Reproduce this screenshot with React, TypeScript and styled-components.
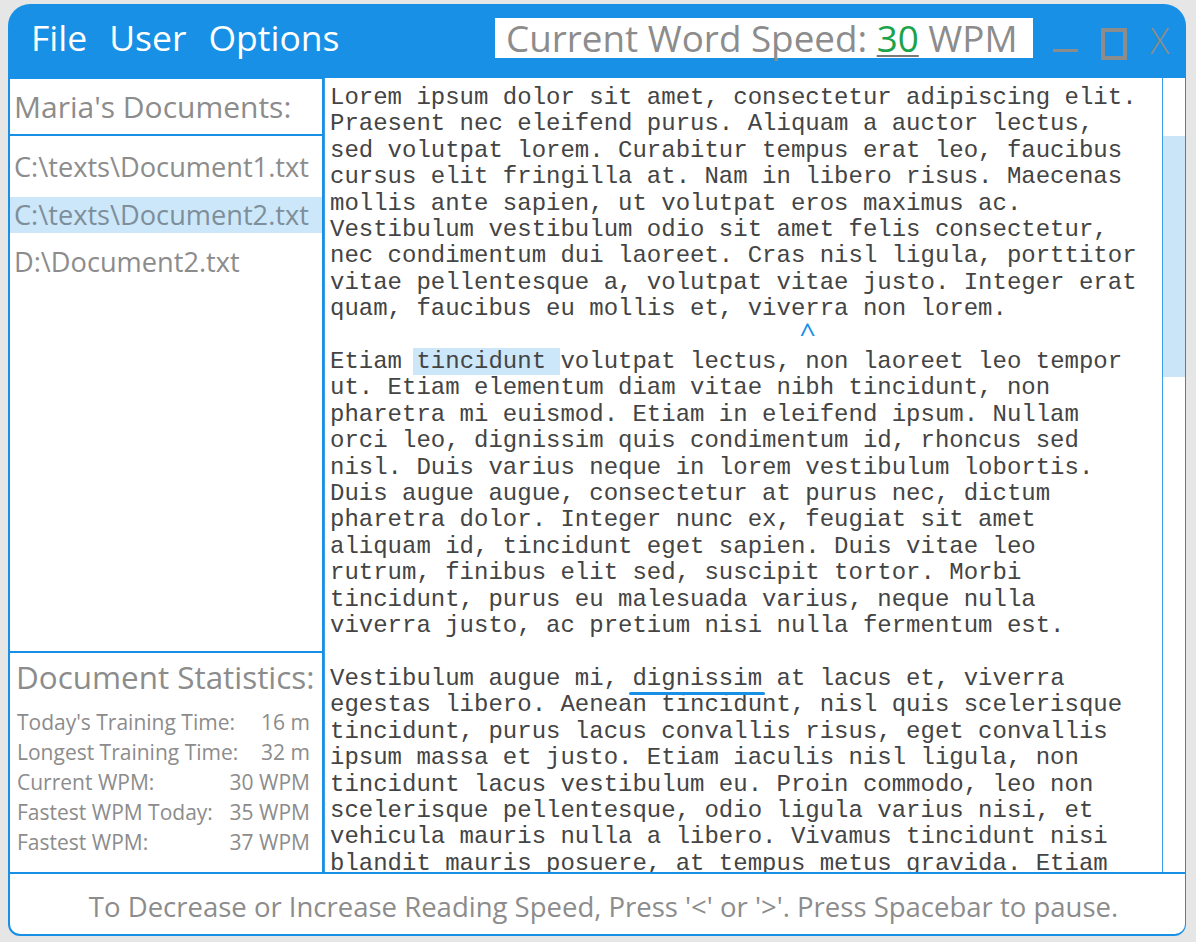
import React from "react";
import styled, { createGlobalStyle } from "styled-components";

const BLUE = "#1790e5";
const GRAY = "#8c8c8c";
const UI = `"Open Sans", "Noto Sans", "Liberation Sans", sans-serif`;

const GlobalStyle = createGlobalStyle`
  html, body { margin: 0; padding: 0; background: #e6e6e6; }
  body { font-family: ${UI}; }
  * { box-sizing: border-box; }
`;

const Window = styled.div`
  width: 1178px;
  height: 932px;
  margin: 4px 0 0 8px;
  background: ${BLUE};
  border-radius: 22px 22px 12px 12px;
  padding: 0 1px 2px 2px;
  display: flex;
  flex-direction: column;
  overflow: hidden;
`;

const TitleBar = styled.div`
  height: 74px;
  display: flex;
  align-items: center;
  padding-left: 21px;
  flex: none;
`;

const Menu = styled.nav`
  display: flex;
  gap: 22px;
  flex: 1;
`;

const MenuItem = styled.span`
  color: #fff;
  font-size: 35.5px;
  line-height: 1;
  margin-top: -6px;
`;

const SpeedBox = styled.div`
  width: 538px;
  height: 40px;
  background: #fff;
  display: flex;
  align-items: center;
  padding-left: 11px;
  color: ${GRAY};
  font-size: 36.8px;
  line-height: 1;
  white-space: nowrap;
  margin: -6px 0 0 2px;
`;

const SpeedValue = styled.span`
  color: #1aa34a;
  text-decoration: underline;
  text-decoration-color: #7a7a7a;
  text-decoration-thickness: 2px;
  text-underline-offset: 3px;
`;

const Controls = styled.div`
  display: flex;
  align-items: center;
  gap: 23px;
  margin-left: 20px;
  padding-right: 15px;
`;

const MinButton = styled.div`
  width: 25px;
  height: 32px;
  border-bottom: 3px solid ${GRAY};
  margin-top: -10px;
`;

const MaxButton = styled.div`
  width: 26px;
  height: 32px;
  border: 4px solid ${GRAY};
  margin-top: 6px;
`;

const CloseButton = styled.span`
  width: 20px;
  color: ${GRAY};
  font-size: 36px;
  font-weight: 300;
  line-height: 1;
`;

const Body = styled.div`
  flex: 1;
  display: flex;
  min-height: 0;
`;

const LeftColumn = styled.aside`
  width: 314px;
  flex: none;
  background: #fff;
  border-right: 2px solid ${BLUE};
  display: flex;
  flex-direction: column;
  margin-top: 1px;
`;

const PanelHeader = styled.div`
  height: 57px;
  border-bottom: 2px solid ${BLUE};
  padding-left: 4px;
  display: flex;
  align-items: center;
  color: ${GRAY};
  font-size: 30px;
  white-space: nowrap;
`;

const FileList = styled.ul`
  list-style: none;
  margin: 0;
  padding: 13px 0 0;
  flex: 1;
  border-bottom: 2px solid ${BLUE};
  display: flex;
  flex-direction: column;
  gap: 11.5px;
`;

const FileItem = styled.li<{ $active?: boolean }>`
  height: 36px;
  line-height: 36px;
  padding-left: 4px;
  font-size: 27.2px;
  white-space: nowrap;
  color: ${(p) => (p.$active ? "#7e8e9a" : GRAY)};
  background: ${(p) => (p.$active ? "#cce7f9" : "transparent")};
`;

const Stats = styled.section`
  height: 219px;
  flex: none;
  padding: 6px 12px 0 7px;
  color: ${GRAY};
`;

const StatsTitle = styled.div`
  font-size: 31.4px;
  line-height: 36px;
  white-space: nowrap;
  margin-bottom: 12px;
  margin-left: -1px;
`;

const StatRow = styled.div`
  display: flex;
  justify-content: space-between;
  font-size: 21px;
  line-height: 30px;
  white-space: nowrap;
`;

const TextArea = styled.main`
  flex: 1;
  background: #fff;
  border-left: 1px solid #3d9ee8;
  border-right: 1px solid #3d9ee8;
  overflow: hidden;
  padding: 7px 0 0 5px;
  font-family: "Liberation Mono", "Courier New", monospace;
  font-size: 24px;
  line-height: 26.4px;
  color: #444;
`;

const TextColumn = styled.div`
  width: 812px;
`;

const Paragraph = styled.p`
  margin: 0;
`;

const BlankLine = styled.div`
  height: 26.4px;
  white-space: pre;
`;

const Caret = styled.span`
  display: inline-block;
  margin-left: 9px;
  color: ${BLUE};
  font-family: ${UI};
  font-size: 27px;
  line-height: 1;
  transform: translateY(-4px) scaleX(1.05);
`;

const Highlight = styled.span`
  background: #cce7f9;
  box-shadow: -3px 0 0 #cce7f9;
`;

const Underlined = styled.span`
  position: relative;
  &::after {
    content: "";
    position: absolute;
    left: -3px;
    right: -3px;
    bottom: -3px;
    height: 3px;
    border-radius: 2px;
    background: ${BLUE};
  }
`;

const ScrollTrack = styled.div`
  width: 22px;
  flex: none;
  background: #fff;
  padding-top: 58px;
`;

const ScrollThumb = styled.div`
  height: 241px;
  background: #cbe5f8;
`;

const Footer = styled.footer`
  height: 62px;
  flex: none;
  background: #fff;
  border-top: 2px solid ${BLUE};
  border-radius: 0 0 10px 10px;
  display: flex;
  align-items: center;
  justify-content: center;
  padding: 4px 0 0 12px;
  color: ${GRAY};
  font-size: 27.5px;
  white-space: nowrap;
`;

const stats: [string, string][] = [
  ["Today's Training Time:", "16 m"],
  ["Longest Training Time:", "32 m"],
  ["Current WPM:", "30 WPM"],
  ["Fastest WPM Today:", "35 WPM"],
  ["Fastest WPM:", "37 WPM"],
];

export default function App() {
  return (
    <>
      <GlobalStyle />
      <Window>
        <TitleBar>
          <Menu>
            <MenuItem>File</MenuItem>
            <MenuItem>User</MenuItem>
            <MenuItem>Options</MenuItem>
          </Menu>
          <SpeedBox>
            Current Word Speed:&nbsp;<SpeedValue>30</SpeedValue>&nbsp;WPM
          </SpeedBox>
          <Controls>
            <MinButton />
            <MaxButton />
            <CloseButton>X</CloseButton>
          </Controls>
        </TitleBar>
        <Body>
          <LeftColumn>
            <PanelHeader>Maria's Documents:</PanelHeader>
            <FileList>
              <FileItem>C:\texts\Document1.txt</FileItem>
              <FileItem $active>C:\texts\Document2.txt</FileItem>
              <FileItem>D:\Document2.txt</FileItem>
            </FileList>
            <Stats>
              <StatsTitle>Document Statistics:</StatsTitle>
              {stats.map(([label, value]) => (
                <StatRow key={label}>
                  <span>{label}</span>
                  <span>{value}</span>
                </StatRow>
              ))}
            </Stats>
          </LeftColumn>
          <TextArea>
            <TextColumn>
              <Paragraph>
                Lorem ipsum dolor sit amet, consectetur adipiscing elit. Praesent nec eleifend
                purus. Aliquam a auctor lectus, sed volutpat lorem. Curabitur tempus erat leo,
                faucibus cursus elit fringilla at. Nam in libero risus. Maecenas mollis ante
                sapien, ut volutpat eros maximus ac. Vestibulum vestibulum odio sit amet felis
                consectetur, nec condimentum dui laoreet. Cras nisl ligula, porttitor vitae
                pellentesque a, volutpat vitae justo. Integer erat quam, faucibus eu mollis et,
                viverra non lorem.
              </Paragraph>
              <BlankLine>
                {" ".repeat(32)}
                <Caret>^</Caret>
              </BlankLine>
              <Paragraph>
                Etiam <Highlight>tincidunt </Highlight>volutpat lectus, non laoreet leo tempor
                ut. Etiam elementum diam vitae nibh tincidunt, non pharetra mi euismod. Etiam in
                eleifend ipsum. Nullam orci leo, dignissim quis condimentum id, rhoncus sed nisl.
                Duis varius neque in lorem vestibulum lobortis. Duis augue augue, consectetur at
                purus nec, dictum pharetra dolor. Integer nunc ex, feugiat sit amet aliquam id,
                tincidunt eget sapien. Duis vitae leo rutrum, finibus elit sed, suscipit tortor.
                Morbi tincidunt, purus eu malesuada varius, neque nulla viverra justo, ac pretium
                nisi nulla fermentum est.
              </Paragraph>
              <BlankLine />
              <Paragraph>
                Vestibulum augue mi, <Underlined>dignissim</Underlined> at lacus et, viverra
                egestas libero. Aenean tincidunt, nisl quis scelerisque tincidunt, purus lacus
                convallis risus, eget convallis ipsum massa et justo. Etiam iaculis nisl ligula,
                non tincidunt lacus vestibulum eu. Proin commodo, leo non scelerisque
                pellentesque, odio ligula varius nisi, et vehicula mauris nulla a libero. Vivamus
                tincidunt nisi blandit mauris posuere, at tempus metus gravida. Etiam vel ipsum
                sit amet nunc tristique fermentum in quis nibh.
              </Paragraph>
            </TextColumn>
          </TextArea>
          <ScrollTrack>
            <ScrollThumb />
          </ScrollTrack>
        </Body>
        <Footer>
          To Decrease or Increase Reading Speed, Press '&lt;' or '&gt;'. Press Spacebar to pause.
        </Footer>
      </Window>
    </>
  );
}
